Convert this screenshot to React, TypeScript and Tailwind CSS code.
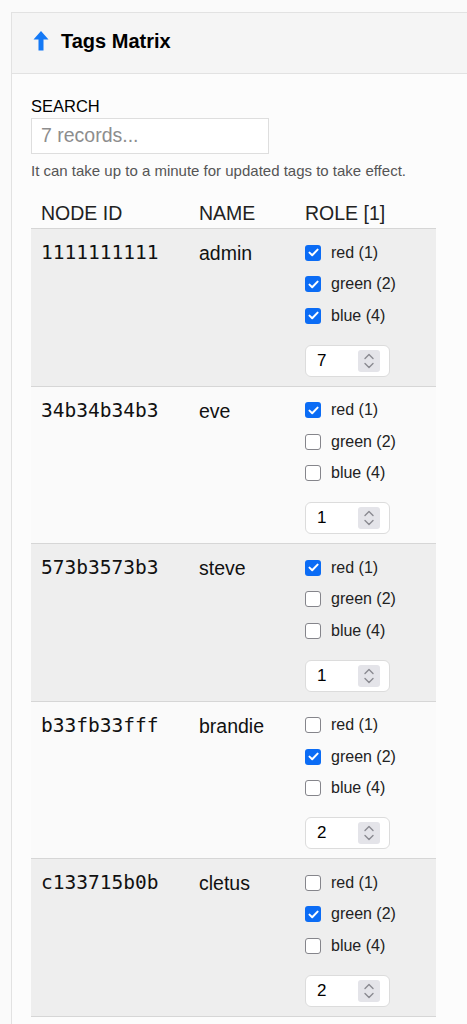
import React from "react";

type Row = { id: string; name: string; roles: boolean[] };

const rows: Row[] = [
  { id: "1111111111", name: "admin", roles: [true, true, true] },
  { id: "34b34b34b3", name: "eve", roles: [true, false, false] },
  { id: "573b3573b3", name: "steve", roles: [true, false, false] },
  { id: "b33fb33fff", name: "brandie", roles: [false, true, false] },
  { id: "c133715b0b", name: "cletus", roles: [false, true, false] },
];

const labels = ["red (1)", "green (2)", "blue (4)"];

const Check = ({ on }: { on: boolean }) =>
  on ? (
    <span className="flex h-[16px] w-[16px] items-center justify-center rounded-[3px] bg-[#0b6cf5]">
      <svg width="11" height="9" viewBox="0 0 11 9" fill="none">
        <path d="M1.5 4.6 4.2 7.2 9.6 1.6" stroke="white" strokeWidth="2" strokeLinecap="round" strokeLinejoin="round" />
      </svg>
    </span>
  ) : (
    <span className="h-[16px] w-[16px] rounded-[3px] border-[1.5px] border-[#85858b] bg-white" />
  );

const NumberBox = ({ value }: { value: number }) => (
  <div className="flex h-[32px] w-[85px] items-center justify-between rounded-[6px] border border-[#dcdcdc] bg-white pl-[11px] pr-[9px]">
    <span className="text-[17px] text-black">{value}</span>
    <span className="flex h-[22px] w-[22px] items-center justify-center rounded-[3px] bg-[#e4e4e9]">
      <svg width="12" height="18" viewBox="0 0 12 18" fill="none">
        <path d="M2 6.5 6 2.5l4 4M2 11.5l4 4 4-4" stroke="#8a8a90" strokeWidth="1.4" strokeLinecap="round" strokeLinejoin="round" />
      </svg>
    </span>
  </div>
);

export default function App() {
  return (
    <div
      className="min-h-screen overflow-hidden bg-[#fafafa] pl-[11px] pt-[12px]"
      style={{ fontFamily: '"Liberation Sans", Arial, sans-serif' }}
    >
      <div className="border-l border-t border-[#e2e2e2]">
        <div className="flex h-[61px] items-center gap-[12px] border-b border-[#e2e2e2] bg-[#f5f5f5] pb-[4px] pl-[21px]">
          <svg width="16" height="20" viewBox="0 0 16 20">
            <path d="M8 0 15.5 8.5H10.5V19.5H5.5V8.5H0.5Z" fill="#1479f6" />
          </svg>
          <h1 className="text-[20px] font-bold text-black">Tags Matrix</h1>
        </div>

        <div className="bg-[#fcfcfc] pl-[19px] pt-[22px]">
          <label className="block text-[16.5px] leading-[20px] text-black">SEARCH</label>
          <div className="mt-[2px] flex h-[36px] w-[238px] items-center border border-[#dedede] bg-white px-[9px]">
            <span className="text-[19.5px] text-[#8d8d8d]">7 records...</span>
          </div>
          <p className="mt-[8px] text-[15px] leading-[18px] text-[#555]">
            It can take up to a minute for updated tags to take effect.
          </p>

          <div className="mt-[15px] w-[405px]">
            <div className="grid h-[34px] grid-cols-[158px_106px_141px] items-center border-b border-[#d6d6d6] pt-[4px] text-[19.5px] text-[#222]">
              <span className="pl-[10px]">NODE ID</span>
              <span className="pl-[10px]">NAME</span>
              <span className="pl-[10px]">ROLE [1]</span>
            </div>

            {rows.map((r, i) => (
              <div
                key={r.id}
                className={`grid grid-cols-[158px_106px_141px] border-b border-[#d6d6d6] ${i % 2 === 0 ? "bg-[#eeeeee]" : "bg-[#fafafa]"}`}
              >
                <span
                  className="pl-[10px] pt-[12px] text-[19.5px] leading-[24px] text-[#111]"
                  style={{ fontFamily: '"DejaVu Sans Mono", "Liberation Mono", monospace' }}
                >
                  {r.id}
                </span>
                <span className="pl-[10px] pt-[12px] text-[19.5px] leading-[24px] text-[#111]">{r.name}</span>
                <div className="pl-[10px] pt-[8px] pb-[9px]">
                  {labels.map((l, j) => (
                    <div key={l} className="flex h-[31.5px] items-center gap-[10px]">
                      <Check on={r.roles[j]} />
                      <span className="text-[16px] text-[#222]">{l}</span>
                    </div>
                  ))}
                  <div className="mt-[13px]">
                    <NumberBox value={r.roles.reduce((s, v, k) => s + (v ? [1, 2, 4][k] : 0), 0)} />
                  </div>
                </div>
              </div>
            ))}
            <div className="h-[20px]" />
          </div>
        </div>
      </div>
    </div>
  );
}
